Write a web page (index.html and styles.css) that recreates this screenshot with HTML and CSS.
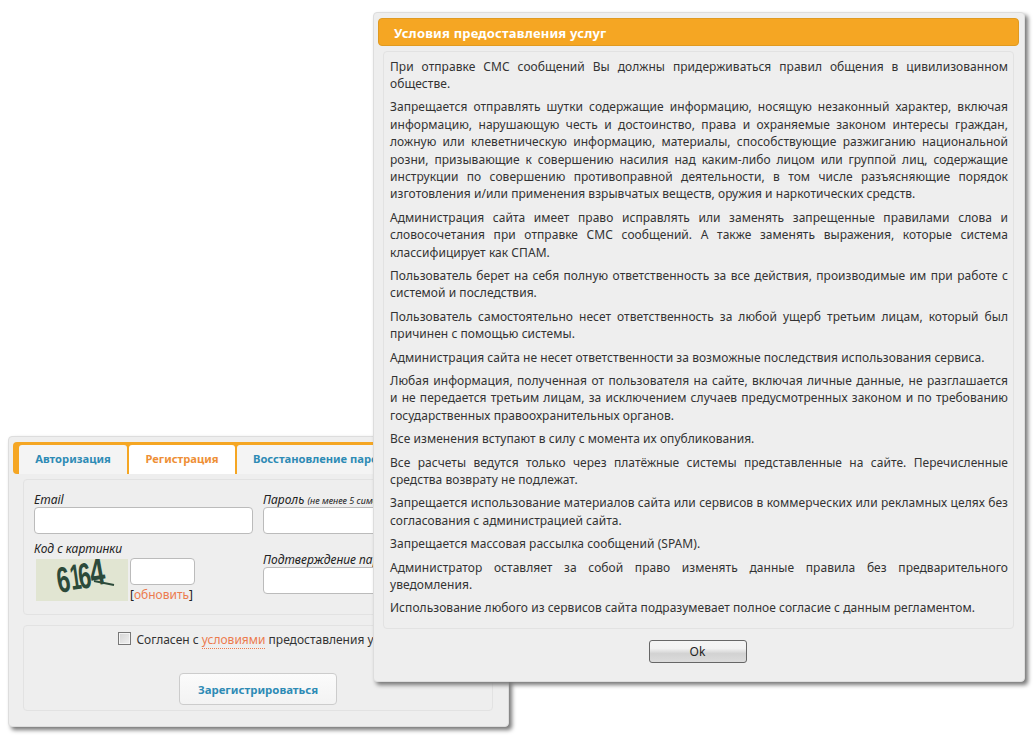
FILE: index.html
```html
<!DOCTYPE html>
<html lang="ru">
<head>
<meta charset="utf-8">
<title>Регистрация</title>
<link rel="stylesheet" href="styles.css">
</head>
<body>
<section class="window login">
  <nav class="tabs">
    <a class="tab">Авторизация</a>
    <a class="tab active">Регистрация</a>
    <a class="tab wide">Восстановление пароля</a>
  </nav>
  <div class="box fields">
    <div class="col">
      <label class="label">Email</label>
      <input class="input full" type="text">
      <label class="label code-label">Код с картинки</label>
      <div class="captcha-row">
        <svg class="captcha" width="92" height="42" viewBox="0 0 92 42">
          <rect width="92" height="42" fill="#e1e5d2"/>
          <g class="captcha-text">
            <text transform="translate(23 34) rotate(-10) scale(.62 .95)">6</text>
            <text transform="translate(36 31) rotate(-8) scale(.5 .95)">1</text>
            <text transform="translate(44 30) rotate(-8) scale(.6 .95)">6</text>
            <text transform="translate(56 27) rotate(-10) scale(.7 1)">4</text>
          </g>
          <path d="M58 22l20 4" stroke="#2c4a3a" stroke-width="2"/>
        </svg>
        <div class="captcha-side">
          <input class="input short" type="text">
          <div class="refresh"><span class="bracket">[</span><a class="link">обновить</a><span class="bracket">]</span></div>
        </div>
      </div>
    </div>
    <div class="col">
      <label class="label">Пароль <small>(не менее 5 символов)</small></label>
      <input class="input full" type="text">
      <label class="label confirm-label">Подтверждение пароля</label>
      <input class="input full" type="text">
    </div>
  </div>
  <div class="box agree">
    <div class="agree-line">
      <span class="check"></span>
      <span>Согласен с <a class="link dotted">условиями</a> предоставления услуг</span>
    </div>
    <button class="submit" type="button">Зарегистрироваться</button>
  </div>
</section>

<section class="window terms">
  <h2 class="title">Условия предоставления услуг</h2>
  <div class="box text">
    <p>При отправке СМС сообщений Вы должны придерживаться правил общения в цивилизованном обществе.</p>
    <p>Запрещается отправлять шутки содержащие информацию, носящую незаконный характер, включая информацию, нарушающую честь и достоинство, права и охраняемые законом интересы граждан, ложную или клеветническую информацию, материалы, способствующие разжиганию национальной розни, призывающие к совершению насилия над каким-либо лицом или группой лиц, содержащие инструкции по совершению противоправной деятельности, в том числе разъясняющие порядок изготовления и/или применения взрывчатых веществ, оружия и наркотических средств.</p>
    <p>Администрация сайта имеет право исправлять или заменять запрещенные правилами слова и словосочетания при отправке СМС сообщений. А также заменять выражения, которые система классифицирует как СПАМ.</p>
    <p>Пользователь берет на себя полную ответственность за все действия, производимые им при работе с системой и последствия.</p>
    <p>Пользователь самостоятельно несет ответственность за любой ущерб третьим лицам, который был причинен с помощью системы.</p>
    <p>Администрация сайта не несет ответственности за возможные последствия использования сервиса.</p>
    <p>Любая информация, полученная от пользователя на сайте, включая личные данные, не разглашается и&nbsp;не передается третьим лицам, за исключением случаев предусмотренных законом и по требованию государственных правоохранительных органов.</p>
    <p>Все изменения вступают в силу с момента их опубликования.</p>
    <p>Все расчеты ведутся только через платёжные системы представленные на сайте. Перечисленные средства возврату не подлежат.</p>
    <p>Запрещается использование материалов сайта или сервисов в коммерческих или рекламных целях без согласования с администрацией сайта.</p>
    <p>Запрещается массовая рассылка сообщений (SPAM).</p>
    <p>Администратор оставляет за собой право изменять данные правила без предварительного уведомления.</p>
    <p>Использование любого из сервисов сайта подразумевает полное согласие с данным регламентом.</p>
  </div>
  <div class="actions"><button class="ok" type="button">Ok</button></div>
</section>
</body>
</html>
```
FILE: styles.css
```css
html, body {
  margin: 0;
  padding: 0;
  height: 737px;
  overflow: hidden;
  background: #fff;
}
body {
  font-family: "Noto Sans", sans-serif;
  font-size: 12px;
  color: #333;
}
.window {
  position: absolute;
  box-sizing: border-box;
  background: #eee;
  border: 1px solid #ddd;
  border-radius: 4px;
  box-shadow: 3px 3px 4px #777;
}
.box {
  box-sizing: border-box;
  border: 1px solid #e2e2e2;
  border-radius: 4px;
}

/* login window */
.login {
  left: 8px;
  top: 436px;
  width: 501px;
  height: 291px;
  padding: 5px 4px;
  overflow: hidden;
}
.tabs {
  display: flex;
  gap: 2px;
  width: 491px;
  height: 32px;
  box-sizing: border-box;
  padding: 3px 0 0 6px;
  background: #f5a623;
  border-radius: 4px;
}
.tab {
  box-sizing: border-box;
  width: 108px;
  height: 29px;
  line-height: 28px;
  text-align: center;
  font-size: 11.2px;
  font-weight: bold;
  color: #2e8bb5;
  background: #f4f4f4;
  border-radius: 3px 3px 0 0;
}
.tab.active {
  width: 106px;
  background: #fff;
  color: #ee8f36;
}
.tab.wide {
  width: 255px;
  background: #f4f4f4;
  text-align: left;
  padding-left: 16px;
}
.fields {
  display: flex;
  gap: 10px;
  width: 470px;
  height: 136px;
  margin: 5px 0 0 10px;
  padding: 12px 10px 0;
  background: #eee;
}
.col {
  width: 219px;
  flex: none;
  display: flex;
  flex-direction: column;
}
.label {
  font-size: 12px;
  font-style: italic;
  line-height: 16px;
  height: 15px;
  color: #222;
}
.label small {
  font-size: 9px;
}
.input {
  box-sizing: border-box;
  display: block;
  height: 27px;
  padding: 0;
  background: #fff;
  border: 1px solid #bbb;
  border-radius: 4px;
}
.full {
  width: 219px;
}
.short {
  width: 65px;
}
.code-label {
  margin-top: 7px;
  height: 17px;
}
.confirm-label {
  margin-top: 18px;
  height: 15px;
}
.captcha-row {
  display: flex;
  gap: 2px;
  padding-left: 2px;
}
.captcha {
  display: block;
  margin-top: 1px;
}
.captcha-text {
  font-family: "Liberation Sans", sans-serif;
  font-size: 38px;
  font-weight: bold;
  fill: #2c4a3a;
}
.refresh {
  font-size: 12px;
  line-height: 16px;
  margin-top: 2px;
}
.bracket {
  color: #222;
}
.link {
  color: #ec7b4e;
}
.dotted {
  border-bottom: 1px dotted #ec7b4e;
}
.agree {
  width: 470px;
  height: 86px;
  margin: 10px 0 0 10px;
  display: flex;
  flex-direction: column;
  align-items: center;
  padding-top: 5px;
}
.agree-line {
  display: flex;
  align-items: center;
  gap: 4px;
  font-size: 12px;
  line-height: 18px;
  white-space: nowrap;
}
.check {
  width: 13px;
  height: 13px;
  box-sizing: border-box;
  margin: -3px 1px 0 0;
  border: 1px solid #777;
  background: linear-gradient(135deg, #d4d4d4, #f0f0f0);
  box-shadow: inset 0 0 0 1px #f4f4f4;
}
.submit {
  margin-top: 24px;
  width: 158px;
  height: 32px;
  padding: 0;
  font: bold 11.4px "Noto Sans", sans-serif;
  color: #2e8bb5;
  background: linear-gradient(#fbfbfb, #f3f3f3);
  border: 1px solid #ccc;
  border-radius: 4px;
}

/* terms window */
.terms {
  left: 373px;
  top: 12px;
  width: 652px;
  height: 670px;
  padding: 5px 5px 0 4px;
}
.title {
  margin: 0;
  height: 28px;
  box-sizing: border-box;
  padding-left: 15px;
  line-height: 29px;
  font-size: 13px;
  letter-spacing: .18px;
  font-weight: bold;
  color: #fff;
  background: #f5a623;
  border: 1px solid #e09a20;
  border-radius: 4px;
}
.text {
  margin: 5px 5px 0 5px;
  height: 578px;
  padding: 5.5px 5px 0 6px;
  color: #333;
  line-height: 17.4px;
  letter-spacing: .045px;
  text-align: justify;
}
.text p {
  margin: 0 0 6px;
}
.actions {
  display: flex;
  justify-content: center;
  padding: 11px 2px 0 0;
}
.ok {
  width: 98px;
  height: 23px;
  padding: 0;
  font: 12px "Noto Sans", sans-serif;
  color: #222;
  background: linear-gradient(#f4f4f4, #f2f2f2 35%, #d2d2d2 60%, #dcdcdc);
  border: 1px solid #666;
  border-radius: 3px;
}
```
